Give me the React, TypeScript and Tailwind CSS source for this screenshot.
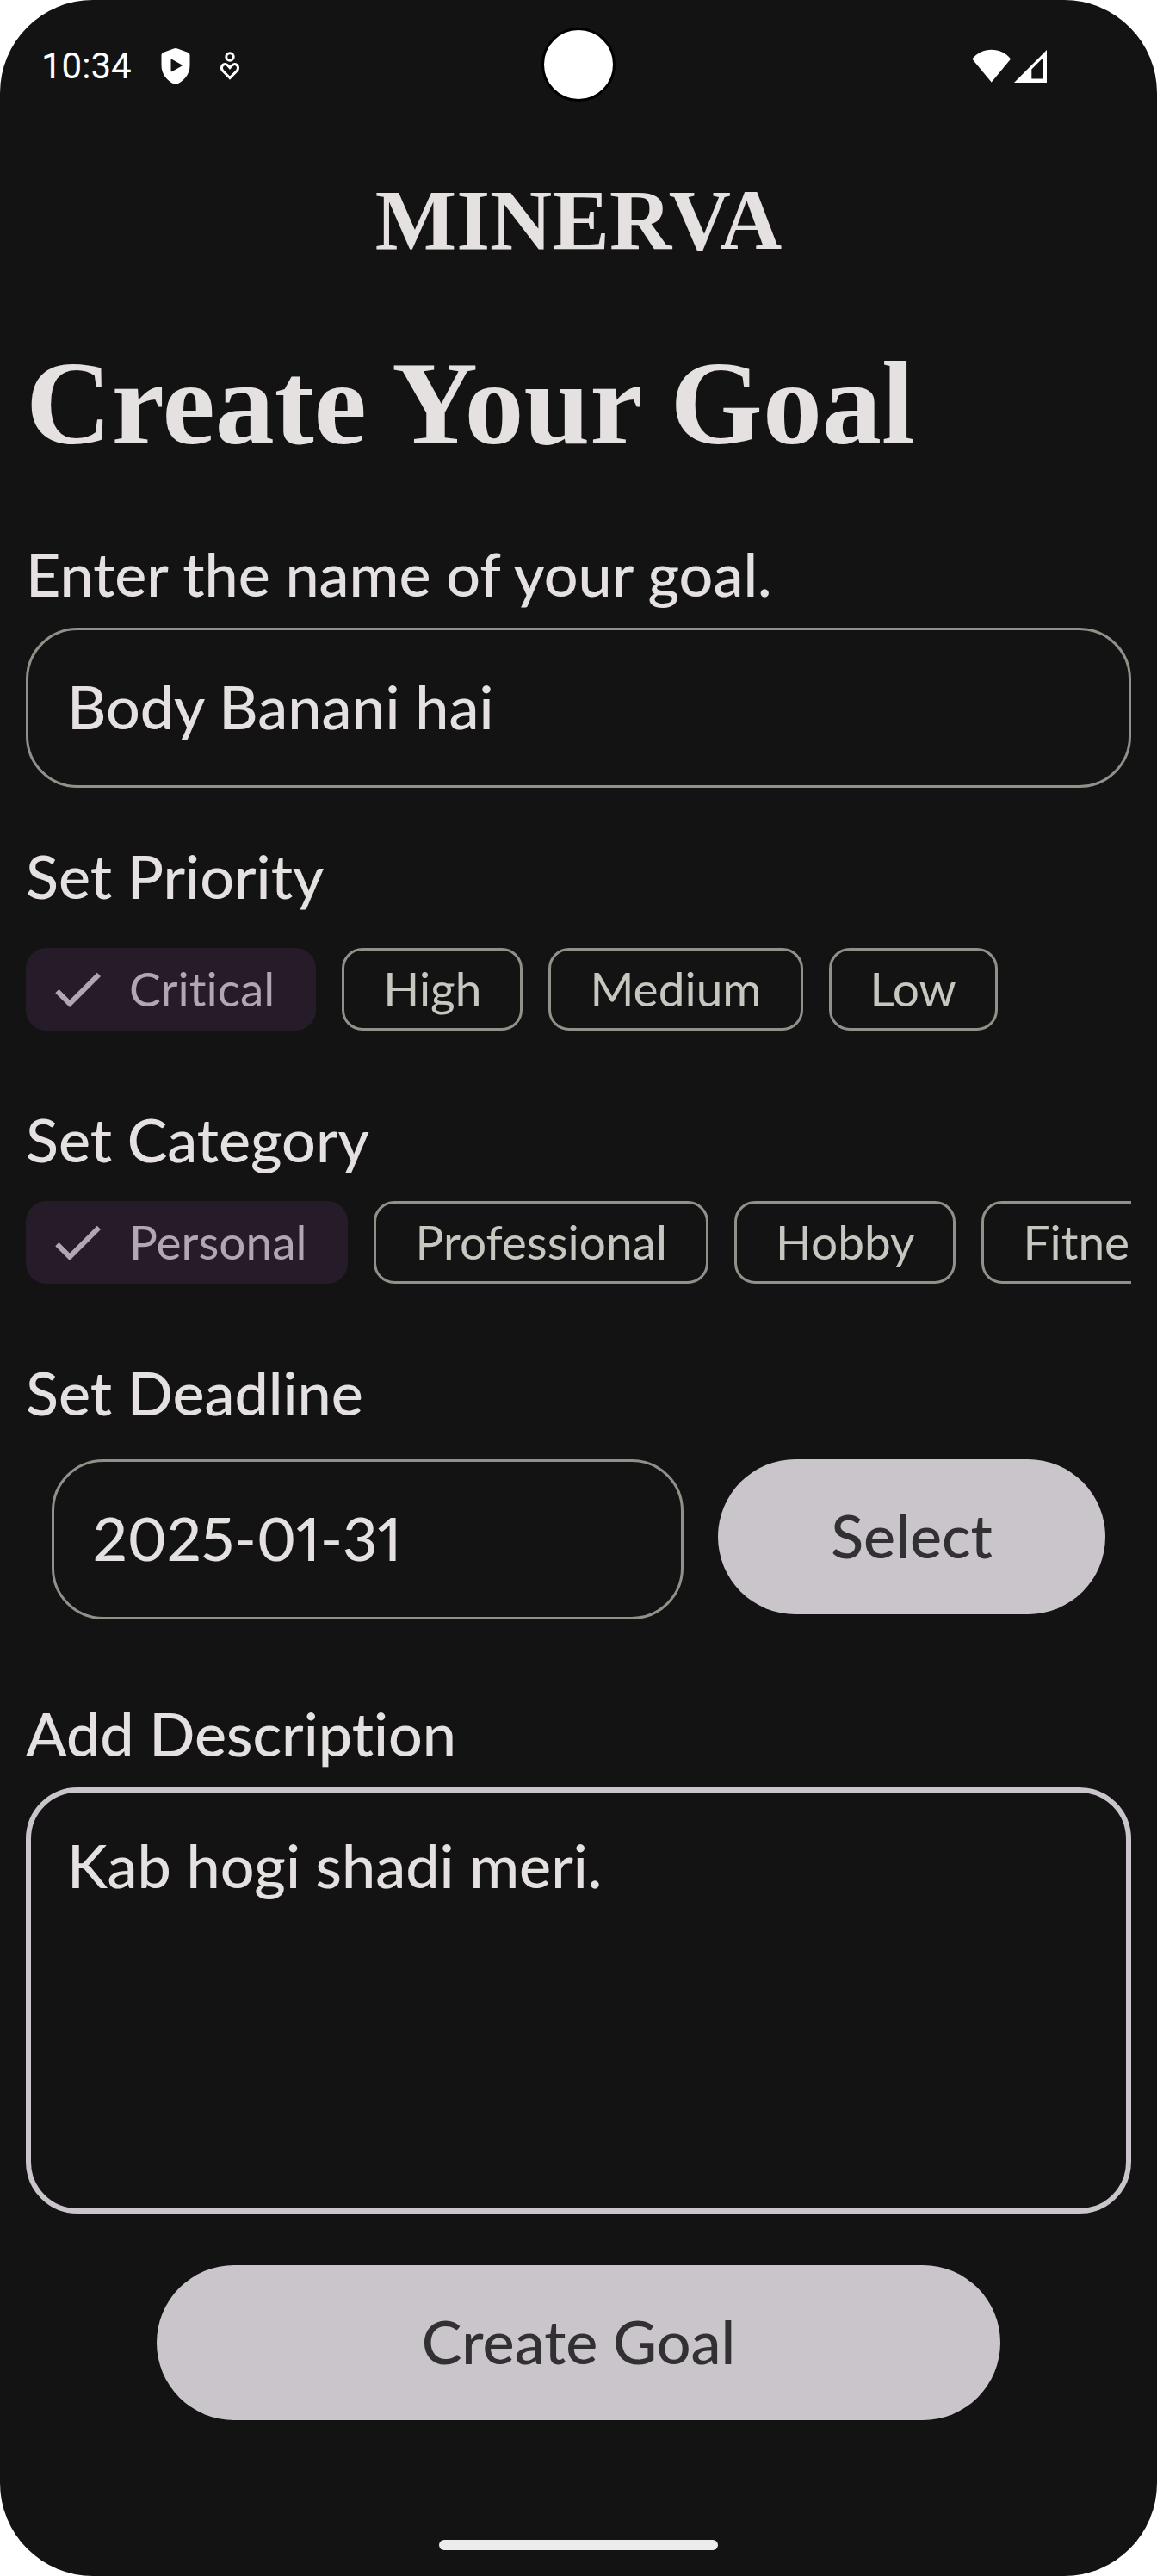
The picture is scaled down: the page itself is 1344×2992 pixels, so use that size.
import { useState } from "react";

const labelClass = "block text-[70px] leading-[84px] font-medium";
const fieldClass =
  "border-[3px] border-[#91918a] rounded-[60px] bg-transparent px-[45px] pb-1 text-[70px] font-medium text-[#e5e1e0] outline-none";
const buttonClass =
  "flex h-[180px] items-center justify-center rounded-full bg-[#cac5cb] pb-1 text-[70px] font-medium text-[#323033]";

function ShieldIcon() {
  return (
    <svg width="34" height="42" viewBox="0 0 34 42" fill="#fff" aria-hidden="true">
      <path
        fillRule="evenodd"
        d="M14.8.5q2.2-.8 4.400 0L31.500 5Q33.500 5.800 33.500 8V20C33.500 30 27 37.500 19.500 41.200Q17 42.300 14.500 41.200C7 37.500.5 30 .5 20V8Q.5 5.800 2.500 5ZM11.500 14V26Q11.500 27.800 13 27L24 20.800Q25.200 20 24 19.200L13 13Q11.500 12.200 11.500 14Z"
      />
    </svg>
  );
}

function WellbeingIcon() {
  return (
    <svg width="24" height="34" viewBox="0 0 24 34" fill="none" stroke="#fff" strokeWidth="3" aria-hidden="true">
      <circle cx="12" cy="6" r="4.200" />
      <path d="M12 30.500 3.800 22.200C1.200 19.300 2.600 14.600 6.600 14.600C9.200 14.600 10.200 16.400 12 18.600C13.800 16.400 14.800 14.600 17.400 14.600C21.400 14.600 22.800 19.300 20.200 22.200Z" />
    </svg>
  );
}

function WifiIcon() {
  return (
    <svg width="46" height="40" viewBox="0 0 46 40" fill="#fff" aria-hidden="true">
      <path d="M.3 11.500C6 4.500 14 .8 22.700.8S39.400 4.500 45.100 11.500L22.700 38.500Z" />
    </svg>
  );
}

function SignalIcon() {
  return (
    <svg width="38" height="38" viewBox="0 0 38 38" fill="#fff" aria-hidden="true">
      <path fillRule="evenodd" d="M0 38H38V0ZM20.300 22.500 33.500 9.200V33.500H20.300Z" />
    </svg>
  );
}

function CheckIcon() {
  return (
    <svg width="72" height="72" viewBox="0 0 24 24" fill="#b4a5b4" aria-hidden="true" className="shrink-0">
      <path d="M9 16.170 4.830 12l-1.420 1.410L9 19 21 7l-1.410-1.410z" />
    </svg>
  );
}

function StatusBar() {
  return (
    <header className="grid h-[154px] grid-cols-[1fr_auto_1fr] items-center">
      <div className="flex items-center gap-[34px] pl-12">
        <time className="font-['Roboto',sans-serif] text-[42px] leading-none text-white">10:34</time>
        <ShieldIcon />
        <WellbeingIcon />
      </div>
      <div className="mt-8 size-[86px] self-start rounded-full border-[3px] border-black bg-white" />
      <div className="flex items-center justify-end gap-[3px] pr-32">
        <WifiIcon />
        <SignalIcon />
      </div>
    </header>
  );
}

interface ChipGroupProps {
  name: string;
  labelId: string;
  options: string[];
  value: string;
  onChange: (value: string) => void;
}

function ChipGroup({ name, labelId, options, value, onChange }: ChipGroupProps) {
  return (
    <div role="radiogroup" aria-labelledby={labelId} className="flex gap-[30px] overflow-hidden">
      {options.map((option) => {
        const selected = option === value;
        return (
          <label
            key={option}
            className={
              selected
                ? "relative flex h-24 shrink-0 cursor-pointer items-center gap-6 rounded-3xl bg-[#261b28] pr-12 pl-6 text-[55px] leading-none text-[#b4a5b4]"
                : "relative flex h-24 shrink-0 cursor-pointer items-center rounded-3xl border-[3px] border-[#91918a] px-[45px] text-[55px] leading-none text-[#c7c7c0]"
            }
          >
            <input
              type="radio"
              name={name}
              value={option}
              checked={selected}
              onChange={() => onChange(option)}
              className="sr-only"
            />
            {selected && <CheckIcon />}
            <span className="pb-0.5">{option}</span>
          </label>
        );
      })}
    </div>
  );
}

export default function App() {
  const [name, setName] = useState("Body Banani hai");
  const [priority, setPriority] = useState("Critical");
  const [category, setCategory] = useState("Personal");
  const [deadline, setDeadline] = useState("2025-01-31");
  const [description, setDescription] = useState("Kab hogi shadi meri.");

  return (
    <div className="bg-white">
      <div className="flex min-h-screen flex-col rounded-[108px] bg-[#131313] font-['Lato',sans-serif] text-[#e5e1e0] [font-variant-ligatures:none]">
        <StatusBar />

        <main className="flex flex-col px-[30px]">
          <p className="mt-[52px] text-center font-['Liberation_Serif',serif] text-[100px] leading-none font-bold">
            MINERVA
          </p>
          <h1 className="mt-[94px] font-['Liberation_Serif',serif] text-[138px] leading-none font-bold">
            Create Your Goal
          </h1>

          <form className="mt-[86px] flex flex-col" onSubmit={(e) => e.preventDefault()}>
            <label htmlFor="goal-name" className={labelClass}>
              Enter the name of your goal.
            </label>
            <input
              id="goal-name"
              type="text"
              value={name}
              onChange={(e) => setName(e.target.value)}
              className={`mt-[21px] h-[186px] w-full ${fieldClass}`}
            />

            <h2 id="priority-label" className={`mt-[60px] mb-[42px] ${labelClass}`}>
              Set Priority
            </h2>
            <ChipGroup
              name="priority"
              labelId="priority-label"
              options={["Critical", "High", "Medium", "Low"]}
              value={priority}
              onChange={setPriority}
            />

            <h2 id="category-label" className={`mt-[84px] mb-[30px] ${labelClass}`}>
              Set Category
            </h2>
            <ChipGroup
              name="category"
              labelId="category-label"
              options={["Personal", "Professional", "Hobby", "Fitness"]}
              value={category}
              onChange={setCategory}
            />

            <label htmlFor="deadline" className={`mt-[84px] mb-9 ${labelClass}`}>
              Set Deadline
            </label>
            <div className="flex items-start gap-10 px-[30px]">
              <input
                id="deadline"
                type="text"
                value={deadline}
                onChange={(e) => setDeadline(e.target.value)}
                className={`h-[186px] min-w-0 flex-1 proportional-nums ${fieldClass}`}
              />
              <button type="button" className={`w-[450px] shrink-0 ${buttonClass}`}>
                Select
              </button>
            </div>

            <label htmlFor="description" className={`mt-[90px] ${labelClass}`}>
              Add Description
            </label>
            <textarea
              id="description"
              value={description}
              onChange={(e) => setDescription(e.target.value)}
              className="mt-[21px] block h-[495px] w-full resize-none rounded-[60px] border-[6px] border-[#cac5cb] bg-transparent px-[42px] py-[42px] text-[70px] leading-[84px] font-medium text-[#e5e1e0] outline-none"
            />

            <button type="submit" className={`mx-auto mt-[60px] w-[980px] max-w-full ${buttonClass}`}>
              Create Goal
            </button>
          </form>
        </main>

        <div className="mx-auto mt-auto mb-[30px] h-3 w-[324px] rounded-full bg-[#ececec]" />
      </div>
    </div>
  );
}
